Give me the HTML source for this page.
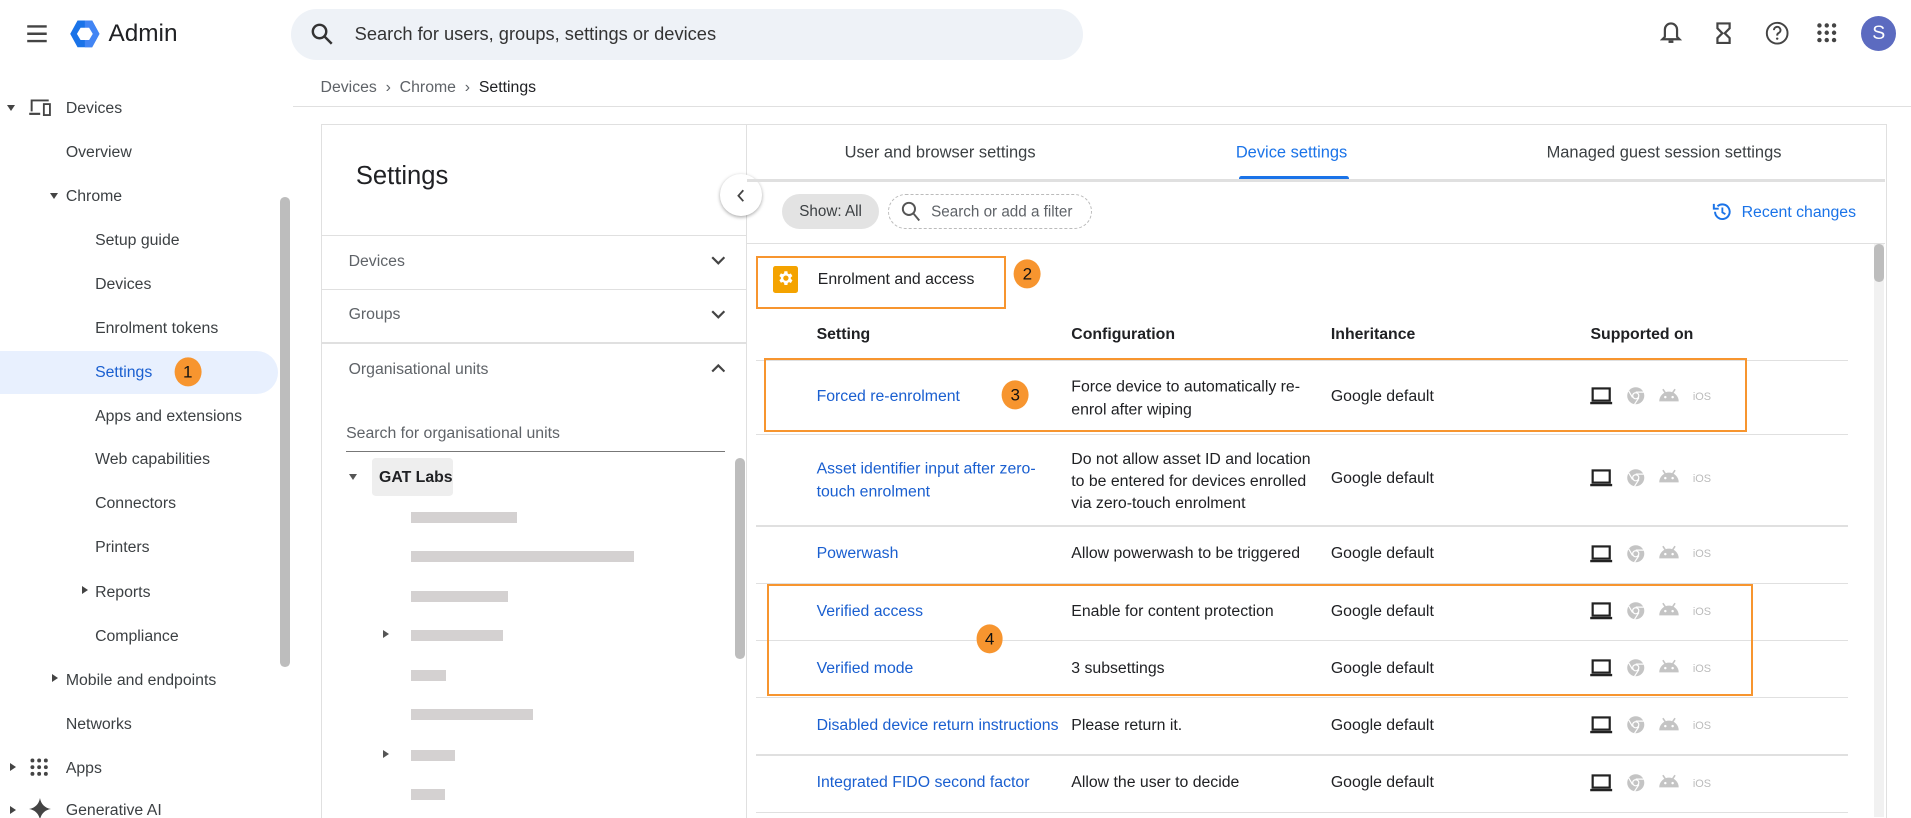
<!DOCTYPE html>
<html><head><meta charset="utf-8"><style>
html,body{margin:0;padding:0;width:1911px;height:818px;overflow:hidden;background:#fff}
#z{zoom:1.21875;width:1568px;height:671px;position:relative;font-family:"Liberation Sans",Arial,sans-serif;color:#202124;font-size:13px;overflow:hidden}
.a{position:absolute;white-space:nowrap}
.nav{position:absolute;font-size:13px;color:#3c4043;transform:translateY(-44%);white-space:nowrap}
.sep{position:absolute;height:1px;background:#e0e0e0}
.badge{position:absolute;width:22px;height:24px;border-radius:50%;background:#f7952f;color:#111;font-size:14px;text-align:center;line-height:24px;transform:translate(-50%,-50%)}
.blur{position:absolute;height:9px;background:#c9c5c5;opacity:.8;left:337px}
.row{position:absolute;transform:translateY(-44%);white-space:nowrap}
.lnk{color:#1a5fd0}
</style></head><body><div id="z">
<svg class="a" style="left:21px;top:20px" width="18" height="16" viewBox="0 0 18 16"><path d="M1 2h16M1 8h16M1 14h16" stroke="#444" stroke-width="2"/></svg>
<svg class="a" style="left:57px;top:15px" width="26" height="26" viewBox="0 0 26 26"><polygon points="7,2 19,2 25,13 19,24 7,24 1,13" fill="#1a73e8"/><polygon points="13,2 19,2 25,13 19,24 13,24" fill="#4285f4"/><polygon points="9.5,8 16.5,8 19.5,13 16.5,18 9.5,18 6.5,13" fill="#fff"/></svg>
<div class="a" style="left:89px;top:16px;font-size:20px;color:#202124">Admin</div>
<div class="a" style="left:239px;top:7px;width:650px;height:42px;border-radius:21px;background:#eef2f7"></div>
<svg class="a" style="left:255px;top:19px" width="18" height="18" viewBox="0 0 18 18"><circle cx="7" cy="7" r="5.5" fill="none" stroke="#333" stroke-width="2"/><path d="M11 11l6 6" stroke="#333" stroke-width="2"/></svg>
<div class="a" style="left:291px;top:19px;font-size:15px;color:#333">Search for users, groups, settings or devices</div>
<svg class="a" style="left:1362px;top:17px" width="18" height="20" viewBox="0 0 18 20"><path d="M9 2a5 5 0 0 0-5 5v6l-2 2h14l-2-2V7a5 5 0 0 0-5-5z" fill="none" stroke="#444" stroke-width="1.8"/><path d="M7 17h4" stroke="#444" stroke-width="2"/></svg>
<svg class="a" style="left:1407px;top:17px" width="14" height="20" viewBox="0 0 14 20"><path d="M2 2h10v4l-4 4 4 4v4H2v-4l4-4-4-4z" fill="none" stroke="#444" stroke-width="1.8"/></svg>
<svg class="a" style="left:1448px;top:17px" width="20" height="20" viewBox="0 0 20 20"><circle cx="10" cy="10" r="8.5" fill="none" stroke="#444" stroke-width="1.6"/><path d="M7.3 7.5a2.7 2.7 0 1 1 3.7 2.5c-1 .4-1 1-1 2" fill="none" stroke="#444" stroke-width="1.6"/><circle cx="10" cy="14.5" r="1" fill="#444"/></svg>
<svg class="a" style="left:1491px;top:19px" width="16" height="16" viewBox="0 0 16 16" fill="#444"><circle cx="2" cy="2" r="1.8"/><circle cx="8" cy="2" r="1.8"/><circle cx="14" cy="2" r="1.8"/><circle cx="2" cy="8" r="1.8"/><circle cx="8" cy="8" r="1.8"/><circle cx="14" cy="8" r="1.8"/><circle cx="2" cy="14" r="1.8"/><circle cx="8" cy="14" r="1.8"/><circle cx="14" cy="14" r="1.8"/></svg>
<div class="a" style="left:1527px;top:13px;width:29px;height:29px;border-radius:50%;background:#5c6bc0;color:#fff;font-size:16px;text-align:center;line-height:29px">S</div>
<div class="a" style="left:263px;top:65px;font-size:13px;color:#5f6368">Devices&nbsp;&nbsp;›&nbsp;&nbsp;Chrome&nbsp;&nbsp;›&nbsp;&nbsp;<span style="color:#202124">Settings</span></div>
<div class="sep" style="left:240px;top:87px;width:1328px"></div>
<div class="a" style="left:6px;top:86px;border-left:4px solid transparent;border-right:4px solid transparent;border-top:5px solid #444"></div>
<svg class="a" style="left:23px;top:80px" width="20" height="16" viewBox="0 0 20 16"><path d="M3 11V2h14" fill="none" stroke="#444" stroke-width="1.6"/><path d="M1 13h9" stroke="#444" stroke-width="1.8"/><rect x="13" y="5" width="5" height="9" fill="none" stroke="#444" stroke-width="1.5"/></svg>
<div class="nav" style="left:54px;top:89px">Devices</div>
<div class="nav" style="left:54px;top:125px">Overview</div>
<div class="a" style="left:41px;top:158px;border-left:4px solid transparent;border-right:4px solid transparent;border-top:5px solid #444"></div>
<div class="nav" style="left:54px;top:161px">Chrome</div>
<div class="nav" style="left:78px;top:197px">Setup guide</div>
<div class="nav" style="left:78px;top:233px">Devices</div>
<div class="nav" style="left:78px;top:269px">Enrolment tokens</div>
<div class="a" style="left:0;top:288px;width:228px;height:35px;background:#e8f0fe;border-radius:0 18px 18px 0"></div>
<div class="nav" style="left:78px;top:305px;color:#1a5fd0">Settings</div>
<div class="badge" style="left:154px;top:305px">1</div>
<div class="nav" style="left:78px;top:341px">Apps and extensions</div>
<div class="nav" style="left:78px;top:377px">Web capabilities</div>
<div class="nav" style="left:78px;top:413px">Connectors</div>
<div class="nav" style="left:78px;top:449px">Printers</div>
<div class="a" style="left:67px;top:481px;border-top:4px solid transparent;border-bottom:4px solid transparent;border-left:5px solid #444"></div>
<div class="nav" style="left:78px;top:486px">Reports</div>
<div class="nav" style="left:78px;top:522px">Compliance</div>
<div class="a" style="left:43px;top:553px;border-top:4px solid transparent;border-bottom:4px solid transparent;border-left:5px solid #444"></div>
<div class="nav" style="left:54px;top:558px">Mobile and endpoints</div>
<div class="nav" style="left:54px;top:594px">Networks</div>
<div class="a" style="left:8px;top:626px;border-top:4px solid transparent;border-bottom:4px solid transparent;border-left:5px solid #444"></div>
<svg class="a" style="left:25px;top:622px" width="15" height="15" viewBox="0 0 15 15" fill="#444"><circle cx="2" cy="2" r="1.6"/><circle cx="7.5" cy="2" r="1.6"/><circle cx="13" cy="2" r="1.6"/><circle cx="2" cy="7.5" r="1.6"/><circle cx="7.5" cy="7.5" r="1.6"/><circle cx="13" cy="7.5" r="1.6"/><circle cx="2" cy="13" r="1.6"/><circle cx="7.5" cy="13" r="1.6"/><circle cx="13" cy="13" r="1.6"/></svg>
<div class="nav" style="left:54px;top:630px">Apps</div>
<div class="a" style="left:8px;top:661px;border-top:4px solid transparent;border-bottom:4px solid transparent;border-left:5px solid #444"></div>
<svg class="a" style="left:24px;top:655px" width="18" height="18" viewBox="0 0 18 18"><path d="M9 0C9.8 5 13 8.2 18 9 13 9.8 9.8 13 9 18 8.2 13 5 9.8 0 9 5 8.2 8.2 5 9 0z" fill="#444"/></svg>
<div class="nav" style="left:54px;top:665px">Generative AI</div>
<div class="a" style="left:230px;top:162px;width:8px;height:385px;border-radius:4px;background:#bdbdbd"></div>
<div class="a" style="left:263px;top:102px;width:348px;height:580px;border:1px solid #e0e0e0"></div>
<div class="a" style="left:292px;top:133px;font-size:21px;color:#202124">Settings</div>
<div class="sep" style="left:264px;top:193px;width:348px"></div>
<div class="nav" style="left:286px;top:214px;color:#5f6368">Devices</div>
<svg class="a" style="left:583px;top:210px" width="12" height="8" viewBox="0 0 12 8"><path d="M1 1l5 5 5-5" fill="none" stroke="#444" stroke-width="1.8"/></svg>
<div class="sep" style="left:264px;top:237px;width:348px"></div>
<div class="nav" style="left:286px;top:258px;color:#5f6368">Groups</div>
<svg class="a" style="left:583px;top:254px" width="12" height="8" viewBox="0 0 12 8"><path d="M1 1l5 5 5-5" fill="none" stroke="#444" stroke-width="1.8"/></svg>
<div class="sep" style="left:264px;top:281px;width:348px"></div>
<div class="nav" style="left:286px;top:303px;color:#5f6368">Organisational units</div>
<svg class="a" style="left:583px;top:298px" width="12" height="8" viewBox="0 0 12 8"><path d="M1 7l5-5 5 5" fill="none" stroke="#444" stroke-width="1.8"/></svg>
<div class="nav" style="left:284px;top:355px;color:#5f6368">Search for organisational units</div>
<div class="a" style="left:284px;top:370px;width:311px;height:1px;background:#777"></div>
<div class="a" style="left:286px;top:389px;border-left:4px solid transparent;border-right:4px solid transparent;border-top:5px solid #555"></div>
<div class="a" style="left:305px;top:376px;width:67px;height:31px;background:#eee;border-radius:3px"></div>
<div class="nav" style="left:311px;top:391px;font-weight:bold;color:#202124">GAT Labs</div>
<div class="blur" style="top:420px;width:87px"></div>
<div class="blur" style="top:452px;width:183px"></div>
<div class="blur" style="top:485px;width:80px"></div>
<div class="a" style="left:314px;top:517px;border-top:4px solid transparent;border-bottom:4px solid transparent;border-left:5px solid #555"></div>
<div class="blur" style="top:517px;width:76px"></div>
<div class="blur" style="top:550px;width:29px"></div>
<div class="blur" style="top:582px;width:100px"></div>
<div class="a" style="left:314px;top:615px;border-top:4px solid transparent;border-bottom:4px solid transparent;border-left:5px solid #555"></div>
<div class="blur" style="top:615px;width:36px"></div>
<div class="blur" style="top:647px;width:28px"></div>
<div class="a" style="left:603px;top:376px;width:8px;height:165px;border-radius:4px;background:#bdbdbd"></div>
<div class="a" style="left:612px;top:102px;width:935px;height:580px;border:1px solid #e0e0e0"></div>
<div class="a" style="left:591px;top:143px;width:34px;height:34px;border-radius:50%;background:#fff;box-shadow:0 1px 3px rgba(0,0,0,.35)"></div>
<svg class="a" style="left:604px;top:155px" width="8" height="11" viewBox="0 0 8 11"><path d="M6 1L2 5.5 6 10" fill="none" stroke="#444" stroke-width="1.5"/></svg>
<div class="nav" style="left:693px;top:125px;font-size:13.5px;color:#3c4043">User and browser settings</div>
<div class="nav" style="left:1014px;top:125px;font-size:13.5px;color:#1a73e8">Device settings</div>
<div class="a" style="left:1017px;top:144px;width:90px;height:3px;background:#1a73e8;border-radius:2px 2px 0 0"></div>
<div class="nav" style="left:1269px;top:125px;font-size:13.5px;color:#3c4043">Managed guest session settings</div>
<div class="a" style="left:613px;top:147px;width:934px;height:2px;background:#e0e0e0"></div>
<div class="a" style="left:642px;top:159px;width:79px;height:29px;border-radius:15px;background:#e3e3e3;font-size:12.5px;text-align:center;line-height:30px;color:#3c4043">Show: All</div>
<div class="a" style="left:729px;top:159px;width:165px;height:27px;border-radius:15px;border:1px dashed #bbb"></div>
<svg class="a" style="left:739px;top:165px" width="16" height="17" viewBox="0 0 16 17"><circle cx="6.5" cy="6.5" r="5" fill="none" stroke="#555" stroke-width="1.6"/><path d="M10 10l5 6" stroke="#555" stroke-width="1.6"/></svg>
<div class="nav" style="left:764px;top:173px;font-size:12.5px;color:#5f6368">Search or add a filter</div>
<svg class="a" style="left:1405px;top:166px" width="16" height="16" viewBox="0 0 16 16"><path d="M2.5 8a6 6 0 1 0 2-4.5" fill="none" stroke="#1a73e8" stroke-width="1.6"/><path d="M1.5 1.5v4h4" fill="none" stroke="#1a73e8" stroke-width="1.6"/><path d="M8.5 4.5V8.5l2.5 1.5" fill="none" stroke="#1a73e8" stroke-width="1.5"/></svg>
<div class="nav" style="left:1429px;top:174px;font-size:13px;color:#1a73e8">Recent changes</div>
<div class="sep" style="left:613px;top:199px;width:934px"></div>
<div class="a" style="left:1538px;top:200px;width:8px;height:470px;background:#f1f1f1"></div>
<div class="a" style="left:1538px;top:200px;width:8px;height:31px;border-radius:4px;background:#bdbdbd"></div>
<div class="a" style="left:620px;top:210px;width:202px;height:40px;border:2px solid #f7952f"></div>
<div class="a" style="left:634px;top:218px;width:21px;height:22px;background:#f4a300;border-radius:2px"></div>
<svg class="a" style="left:637px;top:221px" width="15" height="15" viewBox="0 0 24 24"><path fill="#fff" d="M19.4 13a7.5 7.5 0 0 0 0-2l2.1-1.6-2-3.5-2.5 1a7 7 0 0 0-1.7-1L15 3h-4l-.4 2.7a7 7 0 0 0-1.7 1l-2.5-1-2 3.5L6.5 11a7.5 7.5 0 0 0 0 2l-2.1 1.6 2 3.5 2.5-1a7 7 0 0 0 1.7 1L11 21h4l.4-2.7a7 7 0 0 0 1.7-1l2.5 1 2-3.5zM13 15.5a3.5 3.5 0 1 1 0-7 3.5 3.5 0 0 1 0 7z"/></svg>
<div class="nav" style="left:671px;top:229px;color:#202124">Enrolment and access</div>
<div class="badge" style="left:843px;top:225px">2</div>
<div class="nav" style="left:670px;top:274px;font-weight:bold;color:#202124">Setting</div>
<div class="nav" style="left:879px;top:274px;font-weight:bold;color:#202124">Configuration</div>
<div class="nav" style="left:1092px;top:274px;font-weight:bold;color:#202124">Inheritance</div>
<div class="nav" style="left:1305px;top:274px;font-weight:bold;color:#202124">Supported on</div>
<div class="sep" style="left:620px;top:295px;width:896px"></div>
<div class="sep" style="left:620px;top:356px;width:896px"></div>
<div class="sep" style="left:620px;top:431px;width:896px"></div>
<div class="sep" style="left:620px;top:478px;width:896px"></div>
<div class="sep" style="left:620px;top:525px;width:896px"></div>
<div class="sep" style="left:620px;top:572px;width:896px"></div>
<div class="sep" style="left:620px;top:619px;width:896px"></div>
<div class="sep" style="left:620px;top:666px;width:896px"></div>
<div class="row lnk" style="left:670px;top:325px">Forced re-enrolment</div>
<div class="row" style="left:879px;top:325px;line-height:19px">Force device to automatically re-<br>enrol after wiping</div>
<div class="row" style="left:1092px;top:325px">Google default</div>
<div class="row lnk" style="left:670px;top:392px;line-height:19px">Asset identifier input after zero-<br>touch enrolment</div>
<div class="row" style="left:879px;top:392px;line-height:18px">Do not allow asset ID and location<br>to be entered for devices enrolled<br>via zero-touch enrolment</div>
<div class="row" style="left:1092px;top:392px">Google default</div>
<div class="row lnk" style="left:670px;top:454px">Powerwash</div>
<div class="row" style="left:879px;top:454px">Allow powerwash to be triggered</div>
<div class="row" style="left:1092px;top:454px">Google default</div>
<div class="row lnk" style="left:670px;top:501px">Verified access</div>
<div class="row" style="left:879px;top:501px">Enable for content protection</div>
<div class="row" style="left:1092px;top:501px">Google default</div>
<div class="row lnk" style="left:670px;top:548px">Verified mode</div>
<div class="row" style="left:879px;top:548px">3 subsettings</div>
<div class="row" style="left:1092px;top:548px">Google default</div>
<div class="row lnk" style="left:670px;top:595px">Disabled device return instructions</div>
<div class="row" style="left:879px;top:595px">Please return it.</div>
<div class="row" style="left:1092px;top:595px">Google default</div>
<div class="row lnk" style="left:670px;top:642px">Integrated FIDO second factor</div>
<div class="row" style="left:879px;top:642px">Allow the user to decide</div>
<div class="row" style="left:1092px;top:642px">Google default</div>
<div class="a" style="left:627px;top:294px;width:803px;height:57px;border:2px solid #f7952f"></div>
<div class="badge" style="left:833px;top:324px">3</div>
<div class="a" style="left:629px;top:479px;width:806px;height:89px;border:2px solid #f7952f"></div>
<div class="badge" style="left:812px;top:524px">4</div>
<div id="icons"></div>
<script>
var ys=[325,392,454,501,548,595,642],h='';
ys.forEach(function(y){
h+='<svg class="a" style="left:1304px;top:'+(y-8)+'px" width="20" height="16" viewBox="0 0 20 16"><rect x="3" y="2" width="14" height="10" fill="none" stroke="#222" stroke-width="1.8"/><path d="M1 14h18" stroke="#222" stroke-width="2"/></svg>';
h+='<svg class="a" style="left:1334px;top:'+(y-8)+'px" width="16" height="16" viewBox="0 0 16 16"><circle cx="8" cy="8" r="7" fill="#c4c4c4"/><circle cx="8" cy="8" r="3" fill="#fff"/><circle cx="8" cy="8" r="2" fill="#c4c4c4"/><path d="M8 5h6.5M5.4 9.5L2.2 4M10.6 9.5L7 15" stroke="#fff" stroke-width="1"/></svg>';
h+='<svg class="a" style="left:1360px;top:'+(y-7)+'px" width="18" height="12" viewBox="0 0 18 12"><path d="M1 11a8 8 0 0 1 16 0z" fill="#c4c4c4"/><path d="M4 1l2 3M14 1l-2 3" stroke="#c4c4c4" stroke-width="1.3"/><circle cx="6" cy="7.5" r="1" fill="#fff"/><circle cx="12" cy="7.5" r="1" fill="#fff"/></svg>';
h+='<div class="a" style="left:1389px;top:'+(y-4)+'px;font-size:9px;color:#bbb">iOS</div>';
});
document.getElementById('icons').outerHTML=h;
</script>
</div></body></html>
